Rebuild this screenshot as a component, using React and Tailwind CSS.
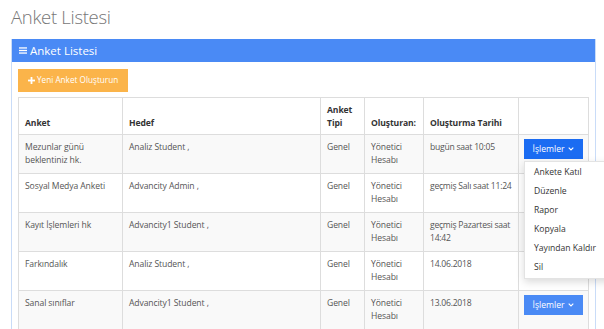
import React from "react";

const rows = [
  { anket: "Mezunlar günü beklentiniz hk.", hedef: "Analiz Student ,", tip: "Genel", tarih: "bugün saat 10:05", open: true },
  { anket: "Sosyal Medya Anketi", hedef: "Advancity Admin ,", tip: "Genel", tarih: "geçmiş Salı saat 11:24", covered: true },
  { anket: "Kayıt İşlemleri hk", hedef: "Advancity1 Student ,", tip: "Genel", tarih: "geçmiş Pazartesi saat 14:42", covered: true },
  { anket: "Farkındalık", hedef: "Analiz Student ,", tip: "Genel", tarih: "14.06.2018", covered: true },
  { anket: "Sanal sınıflar", hedef: "Advancity1 Student ,", tip: "Genel", tarih: "13.06.2018" },
];

const menuItems = ["Ankete Katıl", "Düzenle", "Rapor", "Kopyala", "Yayından Kaldır", "Sil"];

function Chevron() {
  return (
    <svg width="6" height="4" viewBox="0 0 6 4" className="ml-[4px]">
      <path d="M0.7 0.7 L3 3 L5.3 0.7" fill="none" stroke="white" strokeWidth="1.1" />
    </svg>
  );
}

const th = "border border-[#ddd] px-[6px] pt-[6px] pb-[4px] align-bottom";
const td = "border border-[#ddd] px-[6px] py-[6px] align-top";

export default function App() {
  return (
    <div className="w-[604px] h-[329px] overflow-hidden bg-white text-[#555] font-['Open_Sans',sans-serif]">
      {/* Page title */}
      <h1 className="pl-[11px] pt-[4px] h-[39px] text-[18.5px] font-light tracking-[-0.3px] text-[#777] leading-[26px]">
        Anket Listesi
      </h1>

      {/* Panel */}
      <div className="ml-[11px] w-[585px] h-[300px] border-l border-r border-[#c9dcf8]">
        <div className="h-[23px] bg-[#4a8af5] flex items-center pl-[7px] text-white text-[11.5px] leading-none">
          <svg width="8" height="7" viewBox="0 0 8 7" className="mr-[3px]">
            <rect x="0" y="0.3" width="8" height="1.3" fill="white" />
            <rect x="0" y="2.85" width="8" height="1.3" fill="white" />
            <rect x="0" y="5.4" width="8" height="1.3" fill="white" />
          </svg>
          Anket Listesi
        </div>

        <div className="pl-[6px] pt-[7px]">
          <button className="w-[110px] h-[23px] pl-[10px] bg-[#fbb44a] text-white text-[8.2px] flex items-center">
            <svg width="7" height="7" viewBox="0 0 7 7" className="mr-[2px]">
              <rect x="2.6" y="0" width="1.8" height="7" fill="white" />
              <rect x="0" y="2.6" width="7" height="1.8" fill="white" />
            </svg>
            Yeni Anket Oluşturun
          </button>

          <table className="mt-[5px] w-[570px] table-fixed border-collapse text-[8.6px] leading-[13px] tracking-[-0.1px]">
            <colgroup>
              <col className="w-[104px]" />
              <col className="w-[198px]" />
              <col className="w-[44px]" />
              <col className="w-[59px]" />
              <col className="w-[95px]" />
              <col className="w-[70px]" />
            </colgroup>
            <thead>
              <tr className="text-[#333] font-bold text-left">
                <th className={th}>Anket</th>
                <th className={th}>Hedef</th>
                <th className={th}>Anket Tipi</th>
                <th className={th}>Oluşturan:</th>
                <th className={th}>Oluşturma Tarihi</th>
                <th className={th}></th>
              </tr>
            </thead>
            <tbody>
              {rows.map((r, i) => (
                <tr key={i} className={i % 2 === 0 ? "bg-[#f9f9f9]" : "bg-white"}>
                  <td className={td}>{r.anket}</td>
                  <td className={td}>{r.hedef}</td>
                  <td className={td}>{r.tip}</td>
                  <td className={td}>Yönetici Hesabı</td>
                  <td className="border border-[#ddd] pl-[6px] pr-[3px] py-[6px] align-top tracking-[-0.25px]">{r.tarih}</td>
                  <td className="border border-[#ddd] px-[5px] pt-[4px] pb-[4px] align-top">
                    <div className="relative">
                      {/* buttons under the open menu are hidden by it, so they carry no label */}
                      <button
                        aria-label="İşlemler"
                        className={
                          "w-[59px] h-[20px] flex items-center justify-center text-white text-[8.6px] tracking-normal " +
                          (r.open ? "bg-[#1b6cf2]" : "bg-[#4a8af5]")
                        }
                      >
                        {!r.covered && (
                          <>
                            İşlemler
                            <Chevron />
                          </>
                        )}
                      </button>
                      {r.open && (
                        <ul className="absolute z-10 left-0 top-[22px] w-[120px] py-[1px] bg-white border border-[#e3e3e3] shadow-[0_3px_8px_rgba(0,0,0,0.15)] text-[8.6px] text-[#333] tracking-normal">
                          {menuItems.map((m) => (
                            <li key={m} className="h-[19px] leading-[19px] pl-[9px] whitespace-nowrap">
                              {m}
                            </li>
                          ))}
                        </ul>
                      )}
                    </div>
                  </td>
                </tr>
              ))}
            </tbody>
          </table>
        </div>
      </div>
    </div>
  );
}
